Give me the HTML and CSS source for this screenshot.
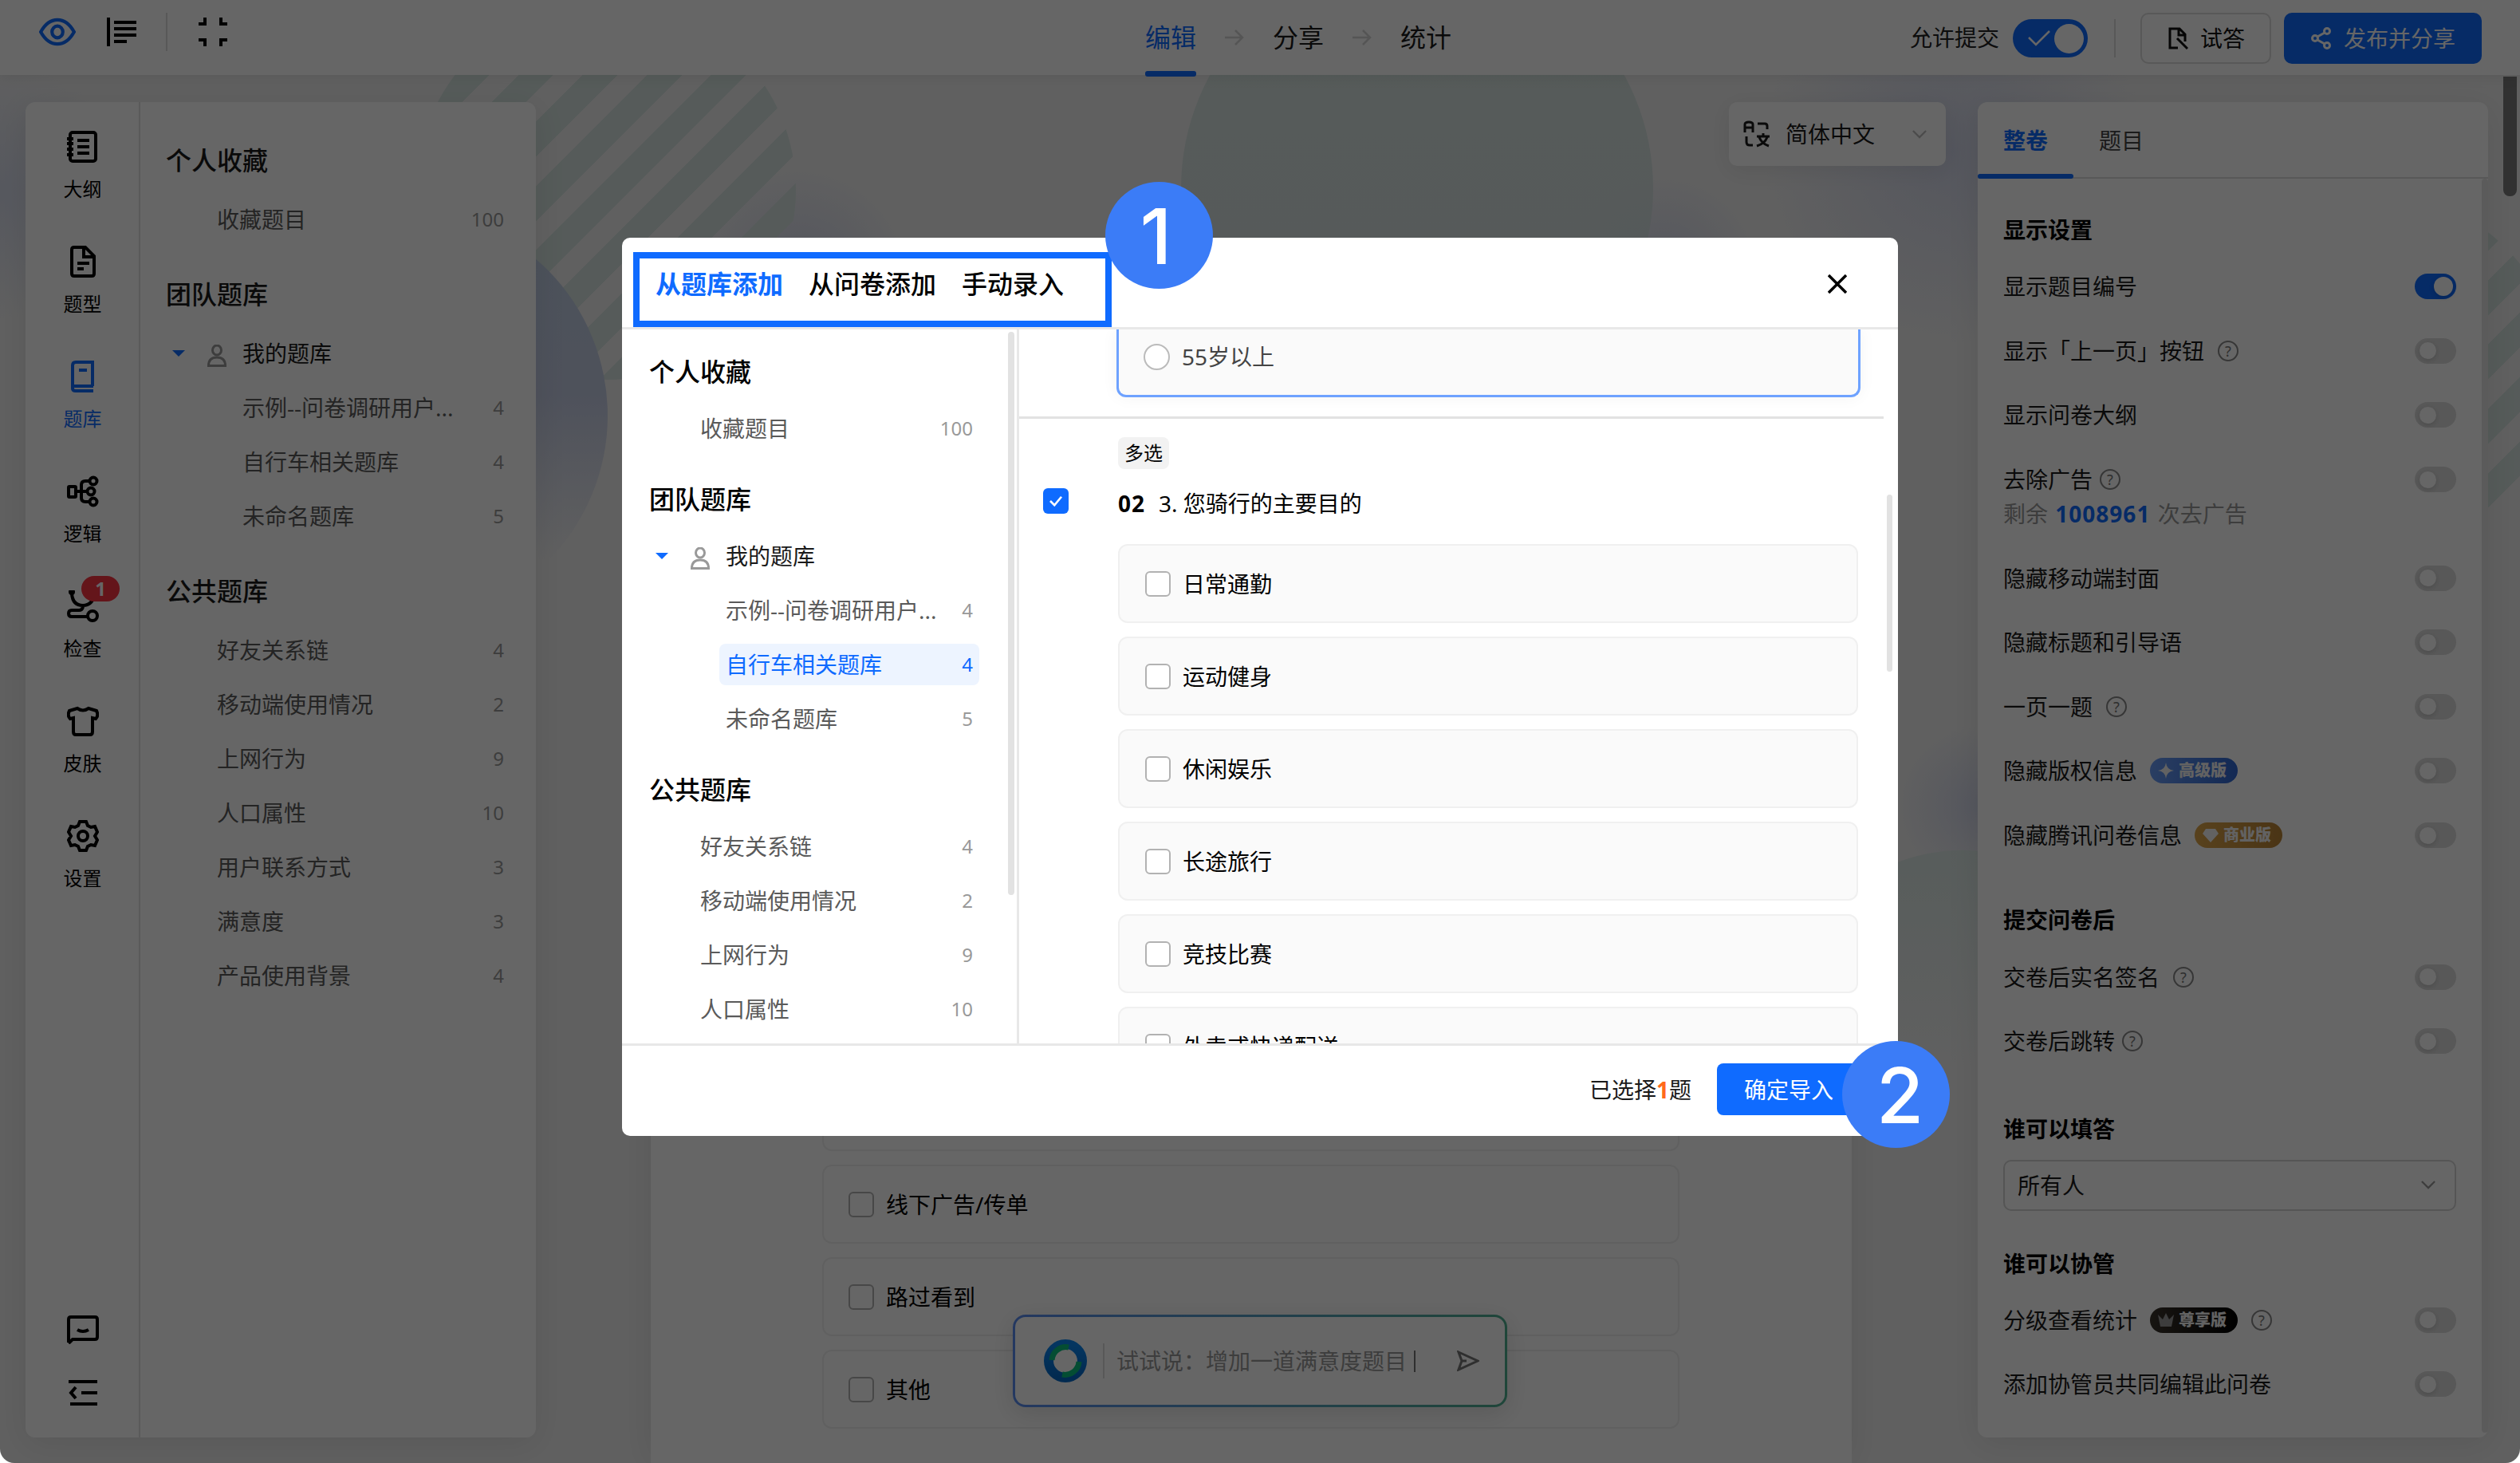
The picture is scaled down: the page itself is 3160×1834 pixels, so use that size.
FILE: index.html
```
<!DOCTYPE html>
<html lang="zh-CN">
<head>
    <meta charset="UTF-8">
    <title>问卷编辑</title>
    <link rel="stylesheet" href="styles.css">
</head>
<body>
<div class="app">
    <div class="bg">
        <i class="bg-stripes"></i>
        <i class="bg-circle"></i>
        <i class="bg-blue"></i>
        <i class="bg-stripes-right"></i>
        <i class="bg-teal"></i>
    </div>

    <header class="header">
        <div class="tools">
            <svg class="ico-eye" viewBox="0 0 44 34" width="46" height="36"><path d="M2 17C7 8 14 2.500 22 2.500S37 8 42 17C37 26 30 31.500 22 31.500S7 26 2 17Z"/><ellipse cx="22" cy="17" rx="6.500" ry="7"/></svg>
            <svg class="ico-list" viewBox="0 0 38 36" width="38" height="36"><path d="M2 0V36M9 6H37M9 14H37M9 22H37M9 30H25"/></svg>
            <span class="split"></span>
            <svg class="ico-shrink" viewBox="0 0 36 36" width="36" height="36"><path d="M0 8H8V0M28 0V8H36M36 28H28V36M8 36V28H0"/></svg>
        </div>
        <nav class="steps">
            <span class="step active">编辑</span>
            <svg class="step-arrow" viewBox="0 0 24 20" width="24" height="20"><path d="M0 10H22M13 1L22 10L13 19"/></svg>
            <span class="step">分享</span>
            <svg class="step-arrow" viewBox="0 0 24 20" width="24" height="20"><path d="M0 10H22M13 1L22 10L13 19"/></svg>
            <span class="step">统计</span>
        </nav>
        <div class="actions">
            <span>允许提交</span>
            <span class="big-switch"><svg viewBox="0 0 28 20" width="28" height="20"><path d="M1 9L10 18L27 1"/></svg><i></i></span>
            <span class="split"></span>
            <button class="btn-try"><svg viewBox="0 0 26 28" width="26" height="28"><path d="M13 26H3V2H15L22 9V18M14 2V10H22M12 14L25 27"/></svg>试答</button>
            <button class="btn-publish"><svg viewBox="0 0 26 28" width="26" height="28"><circle cx="5" cy="14" r="3.500"/><circle cx="20" cy="5" r="3.500"/><circle cx="20" cy="23" r="3.500"/><path d="M8 12L17 7M8 16L17 21"/></svg>发布并分享</button>
        </div>
    </header>

    <div class="workspace">
        <aside class="left-panel">
            <div class="rail">
                <a class="rail-item"><svg viewBox="0 0 40 40"><rect x="4" y="2" width="32" height="36" rx="3"/><path d="M0 10H8M0 16H8M0 23H8M0 30H8M13 12H28M13 20H28M13 28H28"/></svg>大纲</a>
                <a class="rail-item"><svg viewBox="0 0 40 40"><path d="M23 2H9Q6 2 6 5V35Q6 38 9 38H31Q34 38 34 35V13ZM21 3V14H34M13 22H28M13 29H21"/></svg>题型</a>
                <a class="rail-item active"><svg viewBox="0 0 40 40"><path d="M32 32V2H11Q7 2 7 6V35Q7 38 11 38H33M7 32H33M15 12H25"/></svg>题库</a>
                <a class="rail-item"><svg viewBox="0 0 40 40"><rect x="2" y="14" width="9" height="13" rx="1"/><path d="M11 20H27M28 7H23Q18 7 18 12V28Q18 33 23 33H28"/><circle cx="33" cy="7" r="4.500"/><circle cx="30" cy="20" r="4.500"/><circle cx="33" cy="33" r="4.500"/></svg>逻辑</a>
                <a class="rail-item"><svg viewBox="0 0 40 40"><path d="M6 0V4Q7 19 20 19Q32 19 35 4V2M20 19Q20 25 15 25H6Q2 25 2 29T6 33H26"/><circle cx="32" cy="32" r="6"/><circle cx="6" cy="2" r="2"/></svg>检查<b class="rail-badge">1</b></a>
                <a class="rail-item"><svg viewBox="0 0 40 40"><path d="M13 4Q20 9 27 4L37 7Q40 13 36 17L32 16V33Q32 37 29 37H11Q8 37 8 33V16L4 17Q0 13 3 7Z"/></svg>皮肤</a>
                <a class="rail-item"><svg viewBox="0 0 40 40"><path d="M16 2H24L26 7L30 9L35 8L38 15L35 20L38 25L35 32L30 31L26 33L24 38H16L14 33L10 31L5 32L2 25L5 20L2 15L5 8L10 9L14 7Z"/><circle cx="20" cy="20" r="6"/></svg>设置</a>
                <div class="rail-bottom">
                    <svg viewBox="0 0 40 36" width="40" height="36"><path d="M2 34V5Q2 2 5 2H35Q38 2 38 5V27Q38 30 35 30H7L2 35M13 18Q20 22 27 18"/></svg>
                    <svg viewBox="0 0 40 36" width="40" height="36"><path d="M2 3H38M18 17H38M4 31H38M11 10L5 17L11 24"/></svg>
                </div>
            </div>
            <div class="bank">
                <h3>个人收藏</h3>
                <div class="bank-item">收藏题目<em>100</em></div>
                <h3>团队题库</h3>
                <div class="bank-group"><i class="caret"></i><svg viewBox="0 0 24 28" width="24" height="28"><ellipse cx="12" cy="7" rx="5.500" ry="6"/><path d="M1.500 26.500Q1.500 16 12 16T22.500 26.500Z"/></svg>我的题库</div>
                <div class="bank-item sub">示例--问卷调研用户...<em>4</em></div>
                <div class="bank-item sub">自行车相关题库<em>4</em></div>
                <div class="bank-item sub">未命名题库<em>5</em></div>
                <h3>公共题库</h3>
                <div class="bank-item">好友关系链<em>4</em></div>
                <div class="bank-item">移动端使用情况<em>2</em></div>
                <div class="bank-item">上网行为<em>9</em></div>
                <div class="bank-item">人口属性<em>10</em></div>
                <div class="bank-item">用户联系方式<em>3</em></div>
                <div class="bank-item">满意度<em>3</em></div>
                <div class="bank-item">产品使用背景<em>4</em></div>
            </div>
        </aside>

        <main class="stage">
            <div class="lang">
                <svg class="ico-lang" viewBox="0 0 34 34" width="34" height="34"><path d="M2 15V5Q2 2 7 2T12 5V15M2 9H12M18 4H27Q30 4 30 7V11M4 20V27Q4 31 8 31H12M17 20H33M25 16V20M20 21Q23 29 32 32M30 21Q27 29 17 32"/></svg>
                简体中文
                <svg class="chevron" viewBox="0 0 20 12" width="18" height="11"><path d="M1 1L10 10L19 1"/></svg>
            </div>
            <section class="paper">
                <div class="option"></div>
                <div class="option"><i class="box"></i>线下广告/传单</div>
                <div class="option"><i class="box"></i>路过看到</div>
                <div class="option"><i class="box"></i>其他</div>
            </section>
            <div class="ai-bar">
                <svg class="ai-logo" viewBox="0 0 56 56" width="56" height="56">
                    <defs><linearGradient id="ring" x1="0" y1="0" x2="0" y2="1"><stop offset="0" stop-color="#0b86f0"/><stop offset="1" stop-color="#0469c8"/></linearGradient></defs>
                    <circle cx="28" cy="28" r="21" stroke="url(#ring)" stroke-width="12"/>
                    <path d="M11 27A17.500 17.500 0 0 1 32 11M45 29A17.500 17.500 0 0 1 24 45" stroke="#0bc07f" stroke-width="7"/>
                </svg>
                <span class="ai-split"></span>
                <span class="ai-text">试试说：增加一道满意度题目<i></i></span>
                <svg class="ai-send" viewBox="0 0 28 26" width="28" height="26"><path d="M2 2L26 13L2 24L6 13ZM6 13H12"/></svg>
            </div>
        </main>

        <aside class="right-panel">
            <div class="panel-tabs"><span class="active">整卷</span><span>题目</span></div>
            <div class="settings">
                <h4>显示设置</h4>
                <div class="row">显示题目编号<i class="switch on"></i></div>
                <div class="row">显示「上一页」按钮<b class="help far">?</b><i class="switch"></i></div>
                <div class="row">显示问卷大纲<i class="switch"></i></div>
                <div class="row">去除广告<b class="help">?</b><i class="switch"></i></div>
                <p class="remain">剩余 <b>1008961</b> 次去广告</p>
                <div class="row">隐藏移动端封面<i class="switch"></i></div>
                <div class="row">隐藏标题和引导语<i class="switch"></i></div>
                <div class="row">一页一题<b class="help far">?</b><i class="switch"></i></div>
                <div class="row">隐藏版权信息<span class="plan plan-blue"><svg viewBox="0 0 20 20"><path d="M10 0Q11 9 20 10Q11 11 10 20Q9 11 0 10Q9 9 10 0Z"/></svg>高级版</span><i class="switch"></i></div>
                <div class="row">隐藏腾讯问卷信息<span class="plan plan-gold"><svg viewBox="0 0 20 20"><path d="M4 2H16L20 8L10 19L0 8Z"/></svg>商业版</span><i class="switch"></i></div>
                <h4>提交问卷后</h4>
                <div class="row">交卷后实名签名<b class="help far">?</b><i class="switch"></i></div>
                <div class="row">交卷后跳转<b class="help">?</b><i class="switch"></i></div>
                <h4>谁可以填答</h4>
                <div class="select">所有人<svg class="chevron" viewBox="0 0 20 12" width="18" height="11"><path d="M1 1L10 10L19 1"/></svg></div>
                <h4>谁可以协管</h4>
                <div class="row">分级查看统计<span class="plan plan-black"><svg viewBox="0 0 20 20"><path d="M0 3L6 9L10 1L14 9L20 3L17 18H3Z"/></svg>尊享版</span><b class="help far">?</b><i class="switch"></i></div>
                <div class="row">添加协管员共同编辑此问卷<i class="switch"></i></div>
            </div>
            <i class="panel-scroll"></i>
        </aside>
    </div>
    <i class="page-scroll"></i>

    <div class="mask">
        <div class="modal">
            <div class="modal-head">
                <span class="tab active">从题库添加</span>
                <span class="tab">从问卷添加</span>
                <span class="tab">手动录入</span>
                <svg class="close" viewBox="0 0 24 24" width="24" height="24"><path d="M1 1L23 23M23 1L1 23"/></svg>
            </div>
            <div class="modal-body">
                <div class="bank modal-side">
                    <h3>个人收藏</h3>
                    <div class="bank-item">收藏题目<em>100</em></div>
                    <h3>团队题库</h3>
                    <div class="bank-group"><i class="caret"></i><svg viewBox="0 0 24 28" width="24" height="28"><ellipse cx="12" cy="7" rx="5.500" ry="6"/><path d="M1.500 26.500Q1.500 16 12 16T22.500 26.500Z"/></svg>我的题库</div>
                    <div class="bank-item sub">示例--问卷调研用户...<em>4</em></div>
                    <div class="bank-item sub selected">自行车相关题库<em>4</em></div>
                    <div class="bank-item sub">未命名题库<em>5</em></div>
                    <h3>公共题库</h3>
                    <div class="bank-item">好友关系链<em>4</em></div>
                    <div class="bank-item">移动端使用情况<em>2</em></div>
                    <div class="bank-item">上网行为<em>9</em></div>
                    <div class="bank-item">人口属性<em>10</em></div>
                    <i class="side-scroll"></i>
                </div>
                <div class="modal-main">
                    <div class="prev-card"><i class="radio"></i>55岁以上</div>
                    <div class="question">
                        <span class="tag">多选</span>
                        <div class="q-title"><i class="checked"><svg viewBox="0 0 20 16" width="18" height="14"><path d="M2 8L8 14L18 2"/></svg></i><b>02</b>3. 您骑行的主要目的</div>
                        <div class="options">
                            <div class="option"><i class="box"></i>日常通勤</div>
                            <div class="option"><i class="box"></i>运动健身</div>
                            <div class="option"><i class="box"></i>休闲娱乐</div>
                            <div class="option"><i class="box"></i>长途旅行</div>
                            <div class="option"><i class="box"></i>竞技比赛</div>
                            <div class="option"><i class="box"></i>外卖或快递配送</div>
                        </div>
                    </div>
                    <i class="main-scroll"></i>
                </div>
            </div>
            <div class="modal-foot">
                <span>已选择<b>1</b>题</span>
                <button>确定导入</button>
            </div>
            <i class="focus-frame"></i>
            <b class="marker marker-1">1</b>
            <b class="marker marker-2">2</b>
        </div>
    </div>
</div>
</body>
</html>
```
FILE: styles.css
```
* {
    box-sizing: border-box;
}
body {
    margin: 0;
    background: #fff;
    font-family: "Noto Sans", "Noto Sans CJK SC", sans-serif;
    font-size: 28px;
    line-height: 40px;
    color: #1a1a1a;
}
i, em {
    font-style: normal;
}
h3, h4, p {
    margin: 0;
}
svg {
    fill: none;
    stroke: currentColor;
    flex: none;
}
button {
    font: inherit;
    border: none;
}
.app {
    position: relative;
    width: 3160px;
    height: 1834px;
    overflow: hidden;
    background: #f0f0f0;
    border-radius: 0 0 18px 18px;
    display: flex;
    flex-direction: column;
}

/* 背景装饰 */
.bg {
    position: absolute;
    inset: 0;
    background:
        radial-gradient(circle at 2450px 190px, rgba(200, 206, 232, 0.7), transparent 240px),
        radial-gradient(circle at 2085px 340px, rgba(200, 206, 232, 0.7), transparent 120px),
        radial-gradient(circle at 1000px 350px, rgba(200, 206, 232, 0.8), transparent 140px),
        radial-gradient(circle at 2480px 1010px, rgba(200, 206, 232, 0.7), transparent 100px),
        radial-gradient(circle at 0 240px, rgba(205, 212, 235, 0.7), transparent 160px);
}
.bg i {
    position: absolute;
    border-radius: 50%;
}
.bg-stripes {
    left: 522px;
    top: 0;
    width: 476px;
    height: 476px;
    background: repeating-linear-gradient(135deg, #d6e4e0 0 17px, transparent 17px 43px, #d6e4e0 43px 57px);
}
.bg-circle {
    left: 1481px;
    top: -60px;
    width: 592px;
    height: 592px;
    background: linear-gradient(rgba(208, 226, 218, 0.8), rgba(210, 220, 226, 0.8));
}
.bg-blue {
    left: 244px;
    top: 262px;
    width: 518px;
    height: 518px;
    background: linear-gradient(#bccde2, #c4cce4 45%, #f0f0f0 85%);
}
.bg-stripes-right {
    left: 2732px;
    top: 240px;
    width: 480px;
    height: 480px;
    background: repeating-linear-gradient(135deg, transparent 0 11px, #d6e4e0 11px 42px, transparent 42px 57px);
}
.bg-teal {
    left: 2236px;
    top: 1066px;
    width: 448px;
    height: 448px;
    background: linear-gradient(#dbe8e5, #f0f0f0 60%);
}

/* 顶部栏 */
.header {
    position: relative;
    z-index: 2;
    flex: none;
    height: 94px;
    display: flex;
    justify-content: space-between;
    padding: 0 48px 0 49px;
    background: #fff;
    box-shadow: 0 2px 16px rgba(0, 0, 0, 0.08);
}
.tools {
    display: flex;
    align-items: center;
    height: 80px;
    stroke-width: 4;
}
.tools svg {
    color: #000;
}
.tools .ico-eye {
    color: #0f6bff;
}
.ico-list {
    margin-left: 39px;
}
.split {
    width: 2px;
    height: 48px;
    background: #ddd;
}
.tools .split {
    margin: 0 39px 0 36px;
}
.steps {
    position: absolute;
    left: 1436px;
    top: 0;
    display: flex;
    align-items: center;
    gap: 36px;
    height: 94px;
    font-size: 32px;
}
.step {
    height: 94px;
    line-height: 94px;
    width: 64px;
}
.step.active {
    color: #0f6bff;
    position: relative;
}
.step.active::after {
    content: "";
    position: absolute;
    left: 0;
    bottom: -2px;
    width: 64px;
    height: 7px;
    border-radius: 3px;
    background: #0f6bff;
}
.step-arrow {
    stroke-width: 2.5;
    color: #d5d5d5;
}
.actions {
    display: flex;
    align-items: center;
    height: 96px;
    color: #222;
}
.actions > span:first-child {
    margin-top: -2px;
}
.big-switch {
    display: flex;
    align-items: center;
    justify-content: space-between;
    width: 94px;
    height: 48px;
    margin: 0 33px 0 17px;
    padding: 0 5px 0 19px;
    border-radius: 24px;
    background: #0f6bff;
    color: #fff;
    stroke-width: 2.5;
}
.big-switch i {
    width: 37px;
    height: 37px;
    border-radius: 50%;
    background: #fff;
}
.actions button {
    display: flex;
    align-items: center;
    gap: 15px;
    height: 64px;
    border-radius: 10px;
    stroke-width: 3;
}
.btn-try {
    width: 164px;
    margin: 0 16px 0 31px;
    padding: 0 0 0 32px;
    background: #fff;
    border: 2px solid #dcdcdc !important;
    color: #111;
}
.btn-publish {
    width: 248px;
    padding: 0 0 0 34px;
    background: #0f6bff;
    color: #fff;
}

.workspace {
    position: relative;
    flex: 1;
    display: flex;
    padding: 34px 40px 32px 32px;
}

/* 左侧面板 */
.left-panel, .right-panel {
    width: 640px;
    border-radius: 12px;
    background: #fff;
    box-shadow: 0 8px 40px rgba(0, 0, 0, 0.08);
}
.left-panel {
    display: flex;
}
.rail {
    display: flex;
    flex-direction: column;
    width: 144px;
    padding-top: 36px;
    border-right: 2px solid #e2e2e2;
    color: #000;
    stroke-width: 4;
}
.rail-item {
    position: relative;
    display: flex;
    flex-direction: column;
    align-items: center;
    gap: 15px;
    height: 144px;
    padding-left: 1px;
    font-size: 24px;
    line-height: 36px;
}
.rail-item svg {
    width: 40px;
    height: 40px;
}
.rail-item.active {
    color: #0f6bff;
}
.rail-badge {
    position: absolute;
    left: 70px;
    top: -18px;
    width: 48px;
    height: 32px;
    border-radius: 16px;
    background: #fa3541;
    color: #fff;
    line-height: 32px;
    text-align: center;
}
.rail-bottom {
    margin: auto 0 37px;
    padding-left: 2px;
    display: flex;
    flex-direction: column;
    align-items: center;
    gap: 44px;
}

/* 题库目录 */
.bank {
    flex: 1;
    padding: 13px 40px 0 32px;
}
.bank h3 {
    margin-top: 20px;
    font-size: 32px;
    font-weight: 500;
    line-height: 80px;
}
.bank-item {
    display: flex;
    justify-content: space-between;
    padding-left: 64px;
    line-height: 68px;
    color: #5a5a5a;
    white-space: nowrap;
}
.bank-item em {
    font-size: 24px;
    color: #999;
}
.bank-item.sub {
    padding-left: 96px;
}
.bank-group {
    display: flex;
    align-items: center;
    height: 68px;
    padding-left: 8px;
    stroke-width: 3;
}
.bank-group svg {
    margin: 5px 20px 0 28px;
    color: #999;
}
.caret {
    border: 8px solid transparent;
    border-top-color: #0f6bff;
    border-bottom: none;
}

/* 中间画布 */
.stage {
    position: relative;
    flex: 1;
    display: flex;
    flex-direction: column;
    margin-bottom: -32px;
}
.lang {
    align-self: flex-end;
    display: flex;
    align-items: center;
    width: 272px;
    height: 80px;
    margin-right: 40px;
    padding-left: 18px;
    border-radius: 10px;
    background: #fff;
    box-shadow: 0 6px 30px rgba(0, 0, 0, 0.08);
    stroke-width: 3;
}
.ico-lang {
    margin-right: 19px;
}
.chevron {
    color: #999;
    stroke-width: 2.5;
}
.lang .chevron {
    margin-left: 47px;
    color: #bbb;
}
.paper {
    flex: 1;
    display: flex;
    flex-direction: column;
    justify-content: flex-end;
    gap: 17px;
    margin: 200px 158px 0 144px;
    padding: 0 216px 43px 215px;
    background: #fff;
    box-shadow: 0 0 40px rgba(0, 0, 0, 0.08);
}
.option {
    display: flex;
    align-items: center;
    flex: none;
    height: 99px;
    padding-left: 31px;
    border: 2px solid #f0f0f0;
    border-radius: 12px;
    color: #000;
}
.box {
    width: 32px;
    height: 32px;
    margin-right: 15px;
    border: 2px solid #b2b2b2;
    border-radius: 6px;
    background: #fff;
}
.ai-bar {
    position: absolute;
    left: 598px;
    bottom: 70px;
    width: 620px;
    height: 116px;
    display: flex;
    align-items: center;
    padding-left: 35px;
    border: 3px solid transparent;
    border-radius: 16px;
    background: linear-gradient(#fff, #fff) padding-box, linear-gradient(90deg, #5a8cf0, #4fae90) border-box;
    box-shadow: 0 8px 30px rgba(0, 0, 0, 0.12);
    color: #999;
}
.ai-split {
    width: 2px;
    height: 44px;
    margin: 0 15px 0 19px;
    background: #ddd;
}
.ai-text {
    display: flex;
    align-items: center;
    white-space: nowrap;
}
.ai-text i {
    width: 2px;
    height: 27px;
    margin-left: 9px;
    background: #777;
}
.ai-send {
    margin-left: 52px;
    stroke-width: 3;
    color: #777;
}

/* 右侧设置 */
.right-panel {
    position: relative;
}
.panel-tabs {
    display: flex;
    height: 96px;
    border-bottom: 2px solid #ddd;
    line-height: 96px;
    color: #444;
}
.panel-tabs span {
    width: 120px;
    padding-left: 32px;
}
.panel-tabs .active {
    position: relative;
    font-weight: 700;
    color: #0f6bff;
}
.panel-tabs .active::after {
    content: "";
    position: absolute;
    left: 0;
    bottom: -2px;
    width: 120px;
    height: 6px;
    border-radius: 3px;
    background: #0f6bff;
}
.settings {
    padding: 0 40px 0 32px;
}
.settings h4 {
    margin: 46px 0 11px;
    font-size: 28px;
    color: #000;
}
.settings h4:first-child {
    margin-top: 44px;
}
.row {
    display: flex;
    align-items: center;
    height: 80.6px;
}
.help {
    width: 26px;
    height: 26px;
    margin-left: 9px;
    border: 2px solid #888;
    border-radius: 50%;
    font-size: 18px;
    font-weight: 400;
    line-height: 22px;
    text-align: center;
    color: #777;
}
.help.far {
    margin-left: 17px;
}
.switch {
    display: flex;
    align-items: center;
    width: 52px;
    height: 32px;
    margin-left: auto;
    padding: 0 6px;
    border-radius: 16px;
    background: #dcdcdc;
}
.switch::before {
    content: "";
    width: 21px;
    height: 21px;
    border-radius: 50%;
    background: #fff;
    box-shadow: 0 2px 6px rgba(0, 0, 0, 0.15);
}
.switch.on {
    justify-content: flex-end;
    padding: 0 4px;
    background: #0f6bff;
}
.switch.on::before {
    width: 24px;
    height: 24px;
}
.remain {
    margin: -17px 0 20px;
    color: #999;
    word-spacing: 2px;
}
.remain b {
    color: #0f6bff;
    letter-spacing: 1px;
}
.plan {
    display: flex;
    align-items: center;
    width: 110px;
    height: 32px;
    margin-left: 16px;
    padding-left: 10px;
    gap: 6px;
    border-radius: 16px;
    font-size: 20px;
    font-weight: 900;
    color: #f5f5f5;
    white-space: nowrap;
}
.plan svg {
    width: 20px;
    height: 20px;
    fill: currentColor;
    stroke: none;
}
.plan-blue {
    background: linear-gradient(90deg, #6a9cf5, #2f66d0);
}
.plan-gold {
    background: linear-gradient(90deg, #dca54a, #b98335);
}
.plan-black {
    background: linear-gradient(90deg, #3b342c, #000);
}
.plan-black svg {
    color: #999;
}
.select {
    display: flex;
    align-items: center;
    justify-content: space-between;
    height: 64px;
    margin-top: 19px;
    padding: 0 24px 0 16px;
    border: 2px solid #d5d5d5;
    border-radius: 10px;
}
.settings .row + h4:has(+ .select) {
    margin-top: 49px;
}
.panel-scroll {
    position: absolute;
    right: 0;
    top: 96px;
    width: 8px;
    height: 1572px;
    border-radius: 4px;
    background: #e4e4e4;
}
.page-scroll {
    position: absolute;
    left: 3139px;
    top: 96px;
    width: 17px;
    height: 150px;
    border-radius: 0 0 8px 8px;
    background: #7a7a7a;
}

/* 导入弹窗 */
.mask {
    position: absolute;
    inset: 0;
    z-index: 10;
    display: flex;
    justify-content: center;
    align-items: flex-start;
    padding-top: 298px;
    background: rgba(0, 0, 0, 0.6);
}
.modal {
    position: relative;
    width: 1600px;
    height: 1126px;
    border-radius: 10px;
    background: #fff;
}
.modal-head {
    display: flex;
    gap: 32px;
    height: 115px;
    padding: 0 64px 0 42px;
    border-bottom: 3px solid #e8e8e8;
    font-size: 32px;
    font-weight: 500;
    line-height: 115px;
    color: #000;
}
.tab.active {
    position: relative;
    font-weight: 700;
    color: #0f6bff;
}
.tab.active::after {
    content: "";
    position: absolute;
    left: -16px;
    bottom: 0;
    width: 191px;
    height: 6px;
    background: #0f6bff;
}
.close {
    margin: 46px 0 0 auto;
    stroke-width: 3.5;
}
.modal-body {
    display: flex;
    height: 895px;
    overflow: hidden;
}
.modal-side {
    position: relative;
    flex: none;
    width: 498px;
    padding: 0 55px 0 34px;
    border-right: 3px solid #e8e8e8;
}
.modal-side h3 {
    margin-top: 18px;
    line-height: 74px;
    color: #000;
}
.modal-side h3:first-child {
    margin-top: 16px;
}
.modal-side .bank-item.selected {
    height: 52px;
    margin: 8px -8px 8px 88px;
    padding: 0 8px;
    border-radius: 8px;
    background: #edf4ff;
    line-height: 52px;
    color: #0f6bff;
}
.selected em {
    color: #0f6bff;
}
.side-scroll {
    position: absolute;
    right: 3px;
    top: 3px;
    width: 8px;
    height: 706px;
    border-radius: 4px;
    background: #e2e2e2;
}
.modal-main {
    position: relative;
    flex: 1;
}
.prev-card {
    display: flex;
    align-items: center;
    width: 933px;
    height: 85px;
    margin-left: 122px;
    padding: 0 0 14px 31px;
    border: 3px solid #6ea2ff;
    border-top: none;
    border-radius: 0 0 12px 12px;
    background: #fafafa;
    box-shadow: 0 0 20px rgba(0, 0, 0, 0.05);
    color: #444;
}
.radio {
    width: 33px;
    height: 33px;
    margin-right: 15px;
    border: 2px solid #bbb;
    border-radius: 50%;
    background: #fff;
}
.question {
    width: 1084px;
    margin-top: 24px;
    padding: 23px 32px 0 124px;
    border-top: 3px solid #e2e2e2;
}
.tag {
    display: block;
    width: 64px;
    border-radius: 8px;
    background: #f2f2f2;
    font-size: 24px;
    text-align: center;
    color: #000;
}
.q-title {
    display: flex;
    margin: 23px 0 0 -94px;
    color: #000;
}
.q-title b {
    width: 51px;
    letter-spacing: 1px;
}
.checked {
    display: flex;
    align-items: center;
    justify-content: center;
    width: 32px;
    height: 32px;
    margin: 1px 62px 0 0;
    border-radius: 6px;
    background: #0f6bff;
    color: #fff;
    stroke-width: 3;
}
.options {
    display: flex;
    flex-direction: column;
    gap: 17px;
    margin-top: 31px;
}
.options .option {
    background: #fafafa;
}
.options .box {
    margin-left: 1px;
}
.main-scroll {
    position: absolute;
    right: 7px;
    top: 207px;
    width: 7px;
    height: 222px;
    border-radius: 4px;
    background: #e2e2e2;
}
.modal-foot {
    display: flex;
    align-items: center;
    justify-content: flex-end;
    gap: 32px;
    height: 116px;
    padding: 0 49px 4px 0;
    border-top: 3px solid #e8e8e8;
}
.modal-foot b {
    color: #ff6a1a;
}
.modal-foot button {
    width: 178px;
    height: 65px;
    padding: 0 0 0 2px;
    border-radius: 8px;
    background: #0f6bff;
    color: #fff;
}

/* 步骤标注 */
.focus-frame {
    position: absolute;
    left: 14px;
    top: 18px;
    width: 600px;
    height: 94px;
    border: 8px solid #0f6bff;
}
.marker {
    position: absolute;
    width: 135px;
    height: 134px;
    border-radius: 50%;
    background: #3b7cf7;
    color: #fff;
    font-family: Inter, "Liberation Sans", sans-serif;
    font-size: 96px;
    font-weight: 500;
    line-height: 136px;
    text-align: center;
}
.marker-1 {
    left: 606px;
    top: -70px;
    padding-right: 8px;
}
.marker-2 {
    left: 1530px;
    top: 1007px;
    padding-left: 10px;
}
```
